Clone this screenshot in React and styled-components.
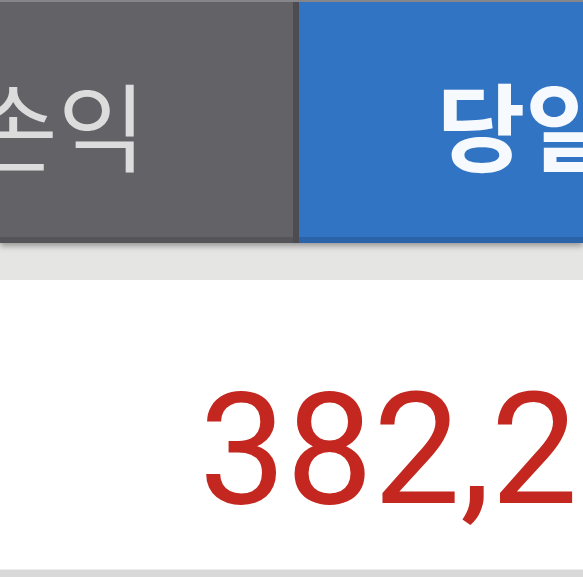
import React from 'react';
import styled, { createGlobalStyle } from 'styled-components';

const GlobalStyle = createGlobalStyle`
  html, body {
    margin: 0;
    padding: 0;
    overflow: hidden;
    background: #fff;
  }
`;

const Screen = styled.div`
  width: 583px;
  height: 577px;
  display: flex;
  flex-direction: column;
  overflow: hidden;
  background: #fff;
`;

const TabBar = styled.div`
  position: relative;
  z-index: 1;
  display: flex;
  height: 243px;
  flex: 0 0 243px;
  box-sizing: border-box;
  border-top: 2px solid #85858a;
  box-shadow: 0 3px 6px rgba(0, 0, 0, 0.35);
`;

const Tab = styled.div`
  display: flex;
  align-items: center;
  overflow: hidden;
  white-space: nowrap;
  box-sizing: border-box;
  font-family: 'Noto Sans CJK KR', 'Noto Sans', sans-serif;
  font-size: 96px;
  line-height: 1;
  box-shadow: inset 0 -6px 0 rgba(0, 0, 0, 0.14);
  background: ${({ $active }) => ($active ? '#3174c3' : '#636267')};
  color: ${({ $active }) => ($active ? '#f6f9fd' : '#dcdcdd')};
  font-weight: ${({ $active }) => ($active ? 700 : 400)};
  flex: ${({ $active }) => ($active ? '1 1 auto' : '0 0 299px')};
  justify-content: ${({ $active }) => ($active ? 'flex-start' : 'flex-end')};
  padding: ${({ $active }) => ($active ? '0 0 0 138px' : '0 147px 0 0')};
  border-right: ${({ $active }) => ($active ? 'none' : '6px solid #4d4d51')};
`;

const SubBar = styled.div`
  flex: 0 0 37px;
  background: #e5e5e4;
`;

const ValueArea = styled.div`
  flex: 1 1 auto;
  box-sizing: border-box;
  padding: 93px 0 0 199px;
  overflow: hidden;
`;

const Value = styled.div`
  font-family: Roboto, 'Liberation Sans', sans-serif;
  font-size: 155px;
  font-weight: 400;
  line-height: 1;
  color: #c3271f;
  white-space: nowrap;
`;

const BottomLine = styled.div`
  flex: 0 0 7px;
  background: #d9d9d9;
  border-top: 1px solid #ececec;
`;

const App = () => {
  return (
    <Screen>
      <GlobalStyle />
      <TabBar>
        <Tab>손익</Tab>
        <Tab $active>당일손익</Tab>
      </TabBar>
      <SubBar />
      <ValueArea>
        <Value>382,264</Value>
      </ValueArea>
      <BottomLine />
    </Screen>
  );
};

export default App;
